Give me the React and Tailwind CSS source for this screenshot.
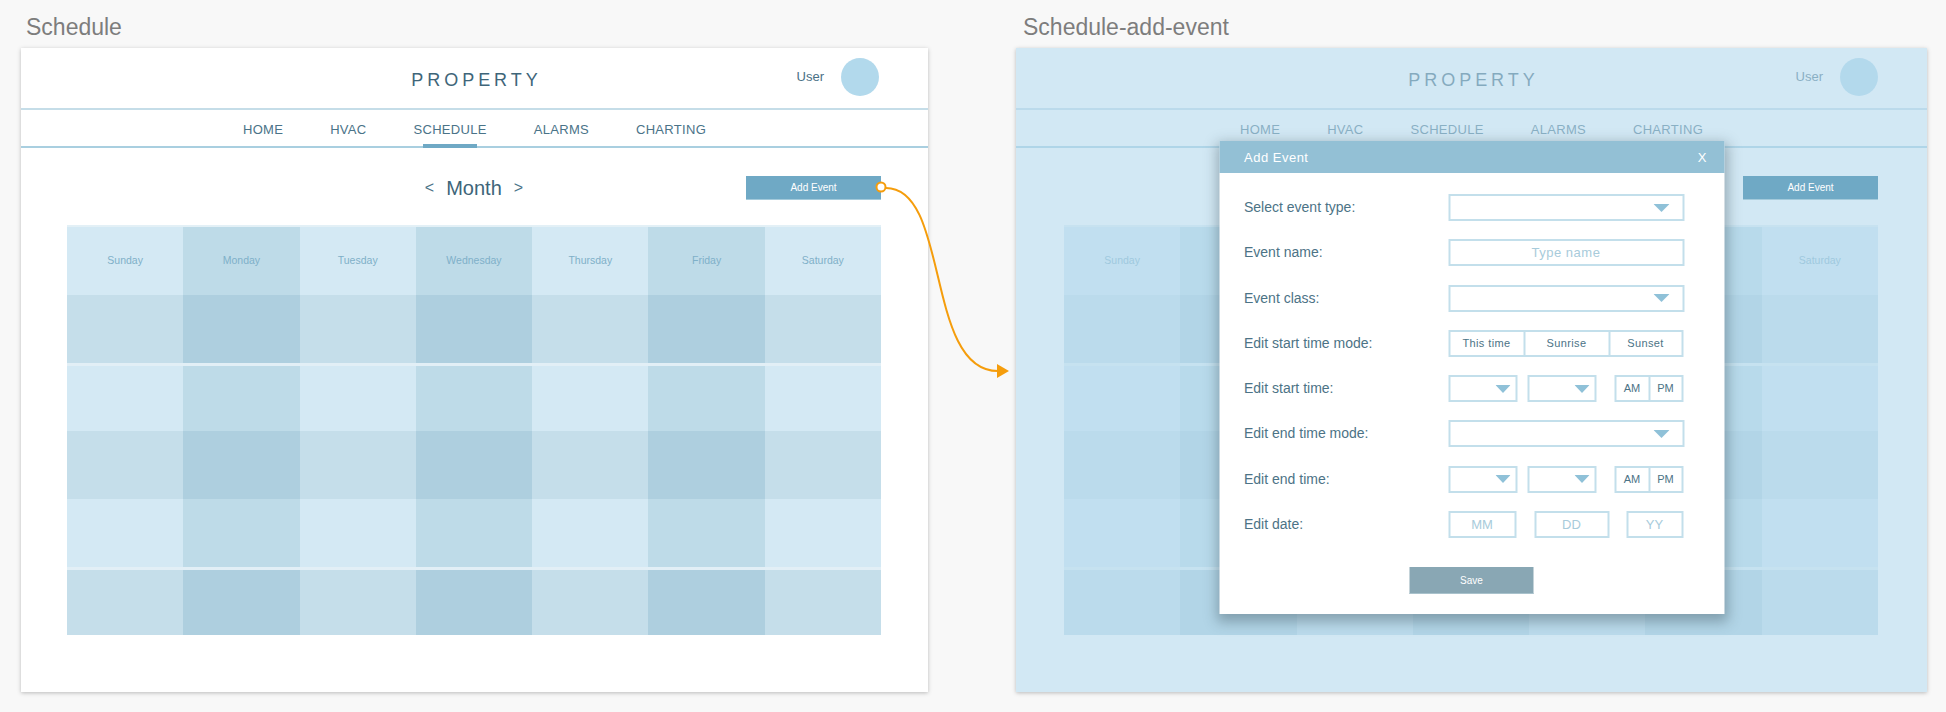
const days = ['Sunday', 'Monday', 'Tuesday', 'Wednesday', 'Thursday', 'Friday', 'Saturday'];
const navItems = ['HOME', 'HVAC', 'SCHEDULE', 'ALARMS', 'CHARTING'];

function Caret({ w = 16 }) {
  return (
    <svg width={w} height="8" viewBox={`0 0 ${w} 8`} className="shrink-0">
      <path d={`M0 0H${w}L${w / 2} 8Z`} fill="#8fc1d8" />
    </svg>
  );
}

function Calendar() {
  return (
    <div className="border-t-2 border-[#e3f0f6]">
      {[0, 1, 2, 3, 4, 5].map((r) => {
        const darkRow = r % 2 === 1;
        const sep = r === 2 || r === 5;
        return (
          <div key={r} className={`grid grid-cols-7 h-[68px] ${sep ? 'border-t-[3px] border-[#e2eff6]' : ''}`}>
            {days.map((d, i) => {
              const darkCol = i % 2 === 1;
              let bg = darkCol ? 'bg-[#bedbe8]' : 'bg-[#d4e9f4]';
              if (darkRow) bg = darkCol ? 'bg-[#aecfdf]' : 'bg-[#c5deea]';
              return (
                <div key={d} className={`${bg} flex items-center justify-center text-[10.5px] text-[#7fb0c8]`}>
                  {r === 0 ? d : ''}
                </div>
              );
            })}
          </div>
        );
      })}
    </div>
  );
}

function SchedulePage({ faded }) {
  return (
    <>
      {/* header */}
      <div className="h-[62px] grid grid-cols-[1fr_auto_1fr] border-b-2 border-[#c5dde8]">
        <div />
        <div className="self-center pt-[4px] text-[18px] tracking-[0.22em] pl-[0.22em] text-[#3e6579]">PROPERTY</div>
        <div className="self-start flex justify-end items-center gap-[17px] pt-[10px] pr-[49px]">
          <span className="text-[13px] text-[#4a7085]">User</span>
          <div className="w-[38px] h-[38px] rounded-full bg-[#b2d9ec]" />
        </div>
      </div>

      {/* nav */}
      <div className="h-[38px] pt-[3px] flex justify-center gap-[47px] border-b-2 border-[#a9cfe0]">
        {navItems.map((n) => (
          <div key={n} className="relative flex items-center text-[13px] tracking-[0.3px] text-[#4a7388]">
            {n}
            {n === 'SCHEDULE' && (
              <div className="absolute left-1/2 -translate-x-1/2 -bottom-[2px] w-[54px] h-[4px] bg-[#6fa9c5]" />
            )}
          </div>
        ))}
      </div>

      <div className={faded ? 'pl-[48px] pr-[49px]' : 'pl-[46px] pr-[47px]'}>
        {/* month row */}
        <div className="h-[77px] pt-[2px] grid grid-cols-[1fr_auto_1fr] items-center">
          <div />
          <div className="flex items-center gap-[12px] text-[#3e6579]">
            <span className="text-[16px] text-[#4a7388]">&lt;</span>
            <span className="text-[20px]">Month</span>
            <span className="text-[16px] text-[#4a7388]">&gt;</span>
          </div>
          <div className="flex justify-end">
            <div className="relative z-20 w-[135px] h-[24px] bg-[#6fa9c5] border-b border-[#a3cadb] flex items-center justify-center text-[10px] text-white">
              Add Event
            </div>
          </div>
        </div>
        <Calendar />
      </div>
    </>
  );
}

function Field({ label, children }) {
  return (
    <div className="flex items-center h-[27px]">
      <div className="w-[204px] text-[14px] text-[#4c7386]">{label}</div>
      {children}
    </div>
  );
}

function SelectBox({ w = 'w-[236px]', small }) {
  return (
    <div className={`${w} h-[27px] border-2 border-[#c3dfeb] flex items-center justify-end ${small ? 'pr-[5px]' : 'pr-[13px]'}`}>
      <Caret w={small ? 15 : 16} />
    </div>
  );
}

function AmPm() {
  return (
    <div className="ml-[18px] w-[69px] h-[27px] border-2 border-[#c3dfeb] flex text-[11px] text-[#4c7386]">
      <div className="w-[34px] flex items-center justify-center border-r-2 border-[#c3dfeb]">AM</div>
      <div className="flex-1 flex items-center justify-center">PM</div>
    </div>
  );
}

function AddEventModal() {
  return (
    <div className="absolute z-30 top-[93px] left-1/2 -translate-x-1/2 w-[505px] bg-white shadow-[0_5px_12px_3px_rgba(40,60,70,0.35)]">
      <div className="h-[32px] pt-[1px] bg-[#93c0d5] flex items-center justify-between pl-[25px] pr-[17px] text-white text-[13px] tracking-[0.5px]">
        <span>Add Event</span>
        <span>X</span>
      </div>
      <div className="pt-[21px] pb-[20px] px-[25px]">
        <div className="flex flex-col gap-[18.3px]">
          <Field label="Select event type:">
            <SelectBox />
          </Field>
          <Field label="Event name:">
            <div className="w-[236px] h-[27px] border-2 border-[#c3dfeb] flex items-center justify-center text-[13px] tracking-[0.5px] text-[#a8cbdb]">
              Type name
            </div>
          </Field>
          <Field label="Event class:">
            <SelectBox />
          </Field>
          <Field label="Edit start time mode:">
            <div className="w-[235px] h-[27px] border-2 border-[#c3dfeb] flex text-[11px] tracking-[0.4px] text-[#4c7386]">
              <div className="w-[75px] flex items-center justify-center border-r-2 border-[#c3dfeb]">This time</div>
              <div className="w-[85px] flex items-center justify-center border-r-2 border-[#c3dfeb]">Sunrise</div>
              <div className="flex-1 flex items-center justify-center">Sunset</div>
            </div>
          </Field>
          <Field label="Edit start time:">
            <SelectBox w="w-[69px]" small />
            <div className="ml-[10px]"><SelectBox w="w-[69px]" small /></div>
            <AmPm />
          </Field>
          <Field label="Edit end time mode:">
            <SelectBox />
          </Field>
          <Field label="Edit end time:">
            <SelectBox w="w-[69px]" small />
            <div className="ml-[10px]"><SelectBox w="w-[69px]" small /></div>
            <AmPm />
          </Field>
          <Field label="Edit date:">
            <div className="w-[68px] h-[27px] border-2 border-[#c3dfeb] flex items-center justify-center text-[13px] text-[#a8cbdb]">MM</div>
            <div className="ml-[18px] w-[75px] h-[27px] border-2 border-[#c3dfeb] flex items-center justify-center text-[13px] text-[#a8cbdb]">DD</div>
            <div className="ml-[17px] w-[57px] h-[27px] border-2 border-[#c3dfeb] flex items-center justify-center text-[13px] text-[#a8cbdb]">YY</div>
          </Field>
        </div>
        <div className="mt-[29px] flex justify-center">
          <div className="w-[124px] h-[27px] bg-[#89a7b4] border-b border-[#a9c2cc] flex items-center justify-center text-[10px] text-white">
            Save
          </div>
        </div>
      </div>
    </div>
  );
}

export default function App() {
  return (
    <div className="relative w-[1946px] h-[712px] overflow-hidden bg-[#f8f8f8] font-['Liberation_Sans',Arial,sans-serif]">
      <div className="flex gap-[88px] pl-[21px]">
        <div className="flex flex-col">
          <div className="h-[48px] pt-[6px] pl-[5px] flex items-center text-[23px] text-[#7d7d7d]">Schedule</div>
          <div className="relative w-[907px] h-[644px] bg-white shadow-[0_1px_4px_rgba(0,0,0,0.25)]">
            <SchedulePage />
          </div>
        </div>

        <div className="flex flex-col">
          <div className="h-[48px] pt-[6px] pl-[7px] flex items-center text-[23px] text-[#7d7d7d]">Schedule-add-event</div>
          <div className="relative w-[911px] h-[644px] bg-white shadow-[0_1px_4px_rgba(0,0,0,0.25)]">
            <SchedulePage faded />
            {/* dim layer behind the dialog */}
            <div className="absolute inset-0 z-10 bg-[rgba(180,217,237,0.6)]" />
            <AddEventModal />
          </div>
        </div>
      </div>

      {/* prototype link arrow */}
      <svg className="absolute top-0 left-0 z-50 pointer-events-none" width="1946" height="712">
        <path d="M886 188 C950 188, 925 371, 998 371" fill="none" stroke="#f59d0c" strokeWidth="2" />
        <path d="M997 364 L1009 371 L997 378 Z" fill="#f59d0c" />
        <circle cx="881" cy="187" r="4.5" fill="#fff" stroke="#f59d0c" strokeWidth="2" />
      </svg>
    </div>
  );
}
